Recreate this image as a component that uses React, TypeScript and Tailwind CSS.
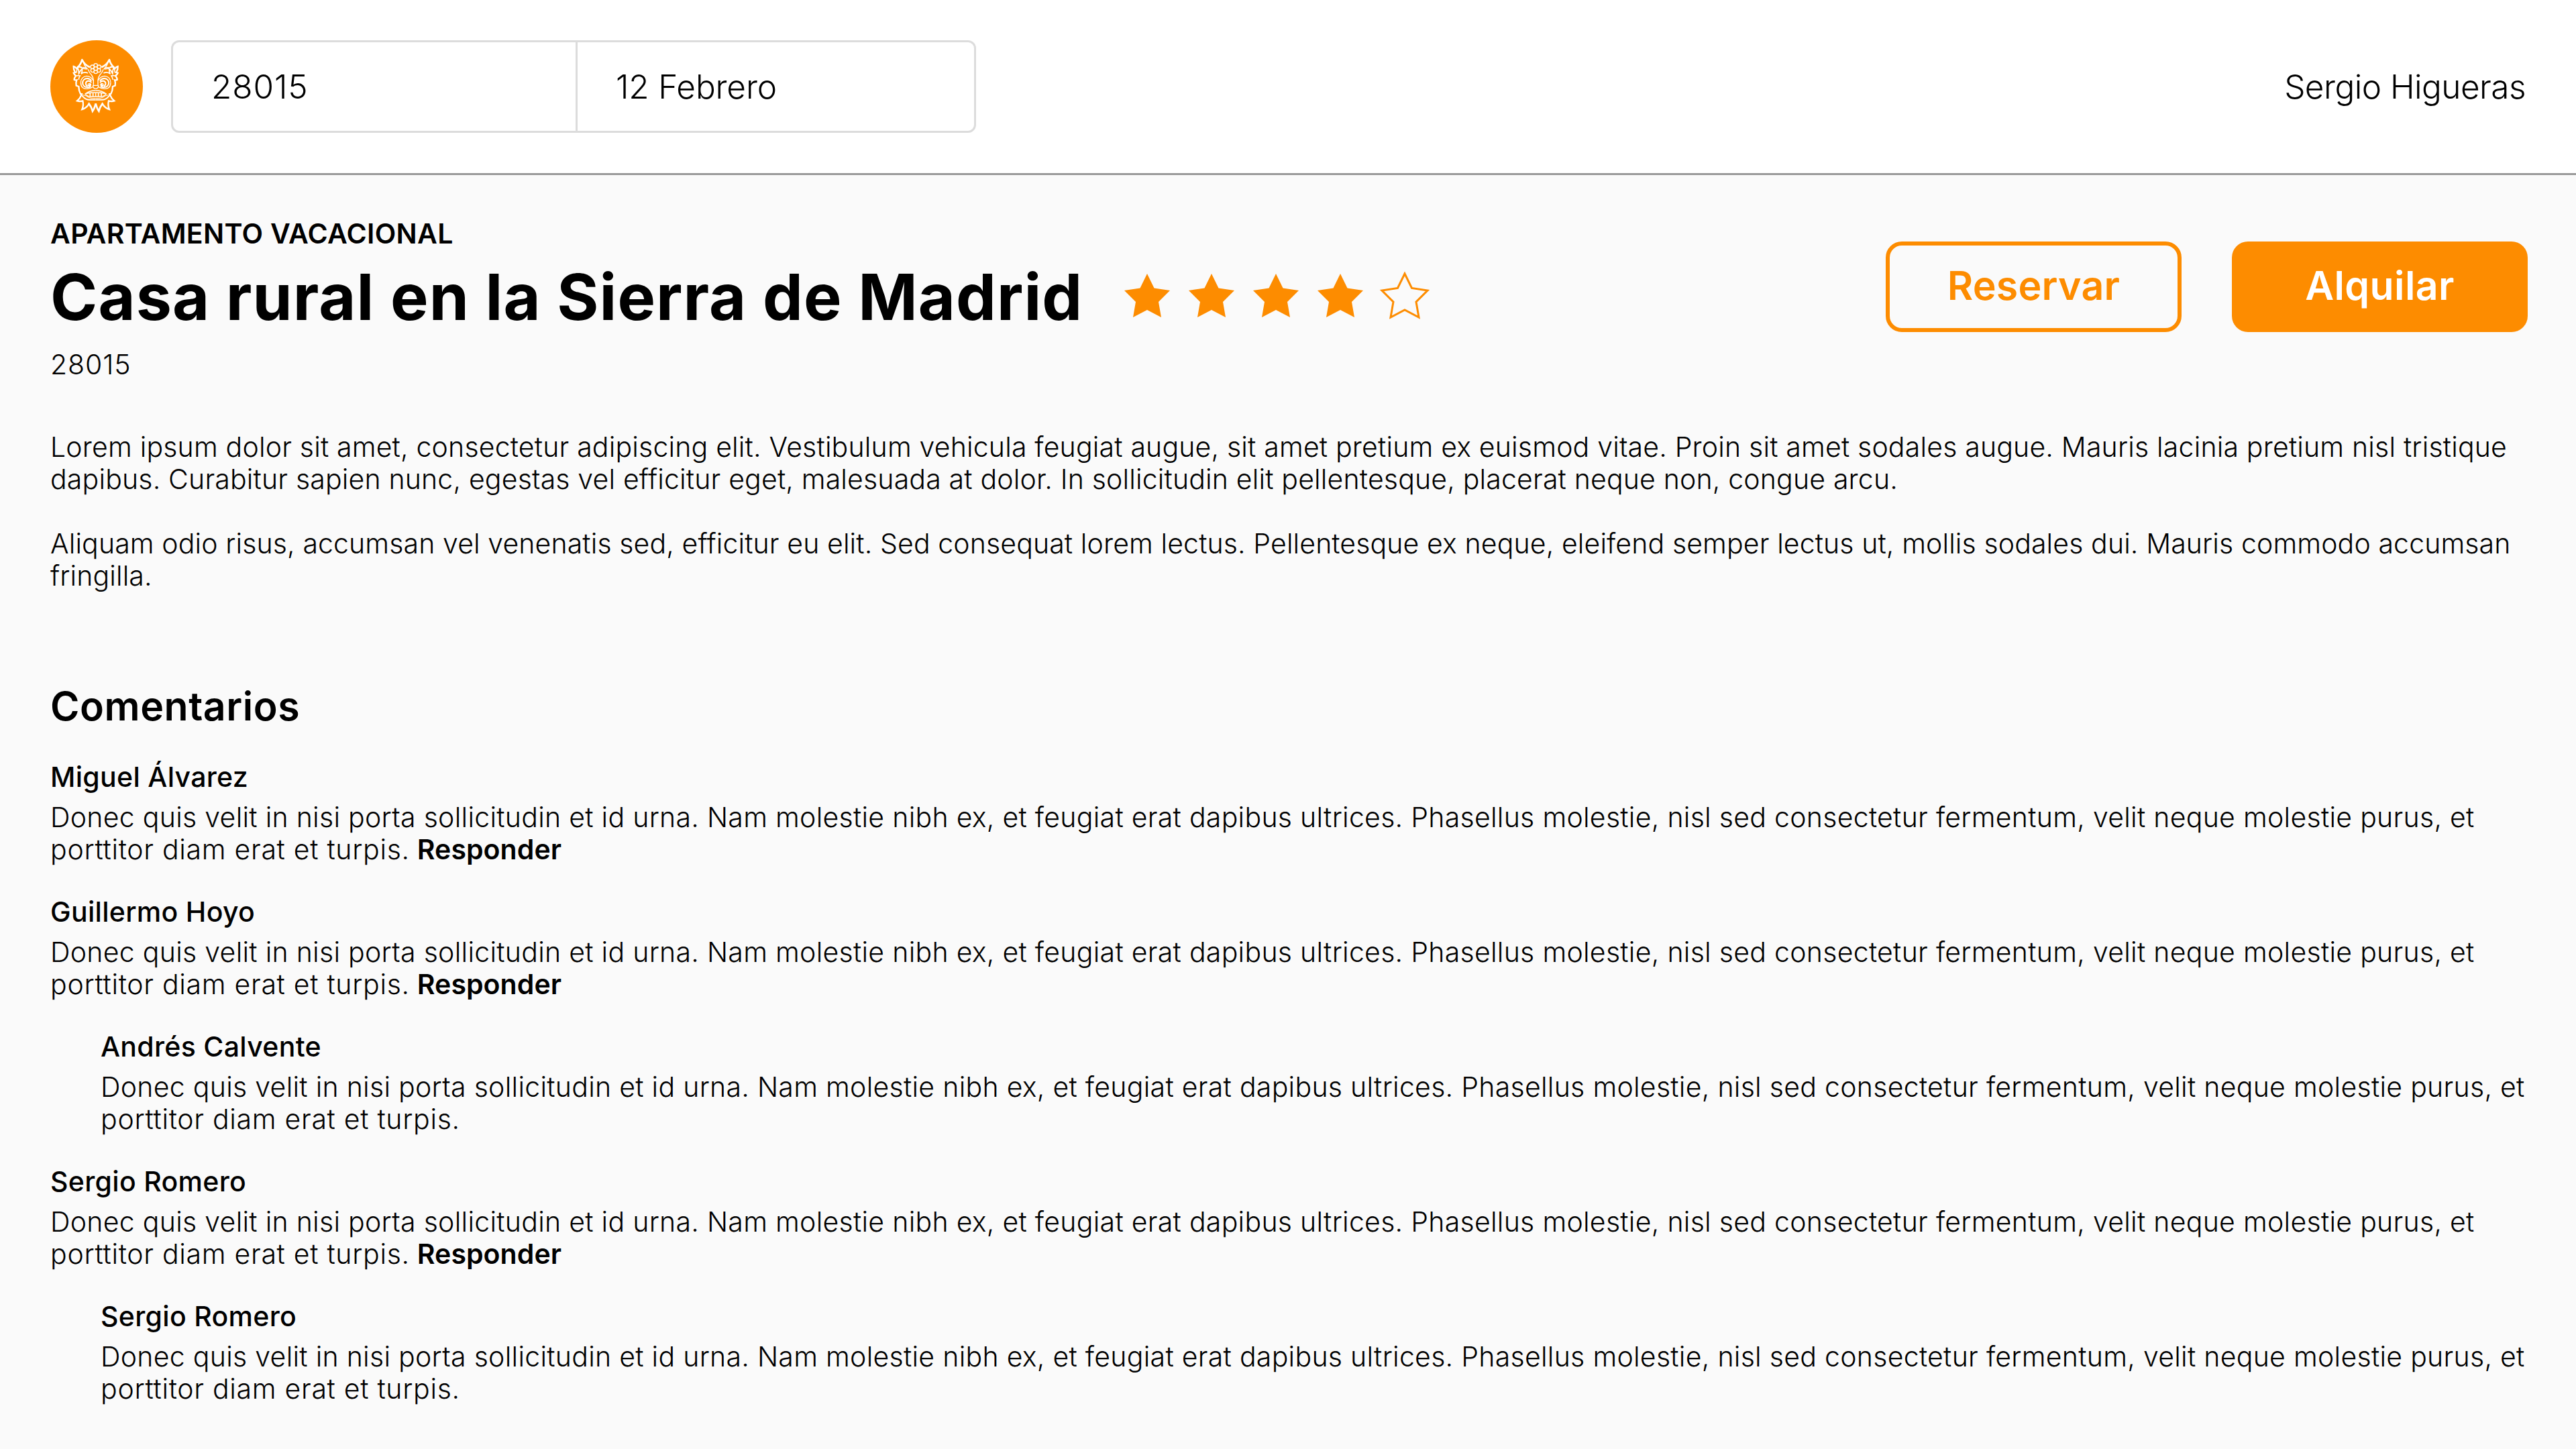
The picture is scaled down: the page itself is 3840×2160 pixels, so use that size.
import type { ReactNode } from "react";

const HalfFace = () => (
  <g>
    <path d="M168 180 Q182 167 187 147 Q198 170 222 181" strokeWidth="8" strokeLinejoin="round" />
    <path d="M193 160 Q197 173 206 183 L190 181" strokeWidth="4" />
    <path d="M187 184 Q180 177 167 180 L164 188 Q157 179 149 177 Q148 190 156 204 L149 206 Q152 215 160 219 Q151 228 152 237 Q158 239 163 238 Q158 250 161 263 L172 267 Q172 286 180 300 L190 301" strokeWidth="7" />
    <path d="M161 206 Q163 193 168 183 Q173 194 172 207 M171 213 Q177 196 188 188 Q188 200 184 209 M182 211 Q196 199 213 207 M187 184 Q200 190 212 187" strokeWidth="5" />
    <path d="M163 219 Q170 217 178 219 Q172 226 172 236" strokeWidth="5" />
    <path d="M214 190 Q219 206 230 216 Q236 224 238 238 L238 260" strokeWidth="4" />
    <path d="M181 250 A27 29 0 0 1 207 220 Q228 221 237 240" strokeWidth="4" />
    <path d="M181 250 Q183 280 210 277 Q226 276 237 268" strokeWidth="4" />
    <path d="M229 242 Q221 230 209 231 A19 19 0 0 0 209 270 Q218 272 227 267" strokeWidth="6" />
    <path d="M229 249 Q220 239 210 243 A12 12 0 0 0 212 265" strokeWidth="6" />
    <circle cx="220" cy="259" r="8" fill="white" stroke="none" />
    <circle cx="217" cy="256" r="2" fill="#fd8c00" stroke="none" />
    <path d="M184 304 Q178 321 165 331 Q176 335 190 331 Q195 351 187 369 Q203 365 213 352" strokeWidth="7" />
    <path d="M184 304 L192 313 Q204 327 222 326 L248 326" strokeWidth="6" />
    <path d="M213 352 L218 344 Q230 360 234 377 Q242 366 248 343" strokeWidth="8" />
    <path d="M248 285 Q218 285 201 300 Q211 312 222 312 L248 312" strokeWidth="4" />
    <path d="M192 305 Q206 307 213 314 Q220 320 248 320" strokeWidth="3" />
    <path d="M206 298 Q222 294 248 294 M223 296 V311 M236 296 V311" strokeWidth="5" />
  </g>
);

const Logo = () => (
  <svg viewBox="45 60 414 414" className="size-[138px] shrink-0" fill="none" stroke="white">
    <circle cx="252" cy="267" r="207" fill="#fd8c00" stroke="none" />
    <HalfFace />
    <g transform="translate(496 0) scale(-1 1)">
      <HalfFace />
    </g>
    <path d="M248 294 V312" strokeWidth="4" />
    <path d="M236 262 H260 Q260 277 248 277 Q236 277 236 262 Z" strokeWidth="4" />
    <g strokeWidth="4" fill="#fd8c00">
      <circle cx="248" cy="172" r="8" />
      <circle cx="233" cy="179" r="8" />
      <circle cx="263" cy="179" r="8" />
      <circle cx="234" cy="195" r="8" />
      <circle cx="262" cy="195" r="8" />
      <circle cx="248" cy="201" r="8" />
      <circle cx="248" cy="187" r="8" />
    </g>
  </svg>
);

const Star = ({ filled }: { filled: boolean }) => (
  <svg viewBox="0 0 96 96" className="size-24" fill={filled ? "#fd8c00" : "none"} stroke={filled ? "none" : "#fd8c00"} strokeWidth="3">
    <path d="M48 16 L58.5 37.5 L82 41 L65 58 L69 81 L48 70 L27 81 L31 58 L14 41 L37.5 37.5 Z" />
  </svg>
);

type CommentData = { author: string; reply?: boolean };

const comments: CommentData[] = [
  { author: "Miguel Álvarez" },
  { author: "Guillermo Hoyo" },
  { author: "Andrés Calvente", reply: true },
  { author: "Sergio Romero" },
  { author: "Sergio Romero", reply: true },
];

const Line = ({ className, children }: { className: string; children: ReactNode }) => (
  <span className={`block whitespace-nowrap ${className}`}>{children}</span>
);

const Comment = ({ author, reply }: CommentData) => (
  <article className={reply ? "pl-[75px]" : ""}>
    <h3 className="font-medium tracking-[0.3px]">{author}</h3>
    <p className="mt-3 font-light">
      <Line className="tracking-[0.28px]">
        Donec quis velit in nisi porta sollicitudin et id urna. Nam molestie nibh ex, et feugiat erat dapibus ultrices. Phasellus molestie, nisl sed
        consectetur fermentum, velit neque molestie purus, et
      </Line>
      <Line className="tracking-[0.7px]">
        porttitor diam erat et turpis.
        {!reply && <button className="ml-[11px] font-semibold tracking-[0.05px]">Responder</button>}
      </Line>
    </p>
  </article>
);

export default function App() {
  return (
    <div className="h-[2160px] w-[3840px] overflow-hidden bg-[#fafafa] font-['Inter',sans-serif] text-[41px] leading-[48px] text-black">
      <header className="flex h-[261px] items-start justify-between border-b-[3px] border-[#999] bg-white px-[75px] pt-[60px] text-[49.5px] font-light">
        <div className="flex gap-[42px]">
          <Logo />
          <div className="flex h-[138px] w-[1200px] rounded-xl border-[3px] border-[#dcdcdc]">
            <div className="flex w-[603px] items-center border-r-[3px] border-[#dcdcdc] pl-[57px] tracking-[0.9px]">28015</div>
            <div className="flex items-center pl-[57px] tracking-[-0.15px]">12 Febrero</div>
          </div>
        </div>
        <div className="flex h-[138px] items-center tracking-[-0.54px]">Sergio Higueras</div>
      </header>

      <main className="pt-[63px] pr-[72px] pl-[75px]">
        <section className="flex justify-between">
          <div>
            <div className="font-semibold tracking-[0.31px]">APARTAMENTO VACACIONAL</div>
            <div className="mt-[14px] flex h-[114px] items-start">
              <h1 className="text-[95px] leading-[114px] font-bold tracking-[1.1px] whitespace-nowrap">Casa rural en la Sierra de Madrid</h1>
              <div className="mt-1.5 ml-12 flex">
                {[1, 2, 3, 4, 5].map((n) => (
                  <Star key={n} filled={n < 5} />
                ))}
              </div>
            </div>
            <div className="mt-[19px] font-light tracking-[0.87px]">28015</div>
          </div>
          <div className="mt-9 flex h-[135px] gap-[75px] text-[59px] font-semibold">
            <button className="w-[441px] rounded-3xl border-[6px] border-[#fd8c00] pb-1 tracking-[0.2px] text-[#fd8c00]">Reservar</button>
            <button className="w-[441px] rounded-3xl bg-[#fd8c00] pb-1 tracking-[0.4px] text-white">Alquilar</button>
          </div>
        </section>

        <section className="mt-[75px] flex flex-col gap-12 font-light">
          <p>
            <Line className="tracking-[0.18px]">
              Lorem ipsum dolor sit amet, consectetur adipiscing elit. Vestibulum vehicula feugiat augue, sit amet pretium ex euismod vitae. Proin sit amet
              sodales augue. Mauris lacinia pretium nisl tristique
            </Line>
            <Line className="tracking-[0.17px]">
              dapibus. Curabitur sapien nunc, egestas vel efficitur eget, malesuada at dolor. In sollicitudin elit pellentesque, placerat neque non, congue
              arcu.
            </Line>
          </p>
          <p>
            <Line className="tracking-[0.115px]">
              Aliquam odio risus, accumsan vel venenatis sed, efficitur eu elit. Sed consequat lorem lectus. Pellentesque ex neque, eleifend semper lectus
              ut, mollis sodales dui. Mauris commodo accumsan
            </Line>
            <Line className="tracking-[0.115px]">fringilla.</Line>
          </p>
        </section>

        <section className="mt-[135px]">
          <h2 className="text-[59px] leading-[72px] font-semibold tracking-[0.54px]">Comentarios</h2>
          <div className="mt-[45px] flex flex-col gap-[45px]">
            {comments.map((comment, i) => (
              <Comment key={i} {...comment} />
            ))}
          </div>
        </section>
      </main>
    </div>
  );
}
